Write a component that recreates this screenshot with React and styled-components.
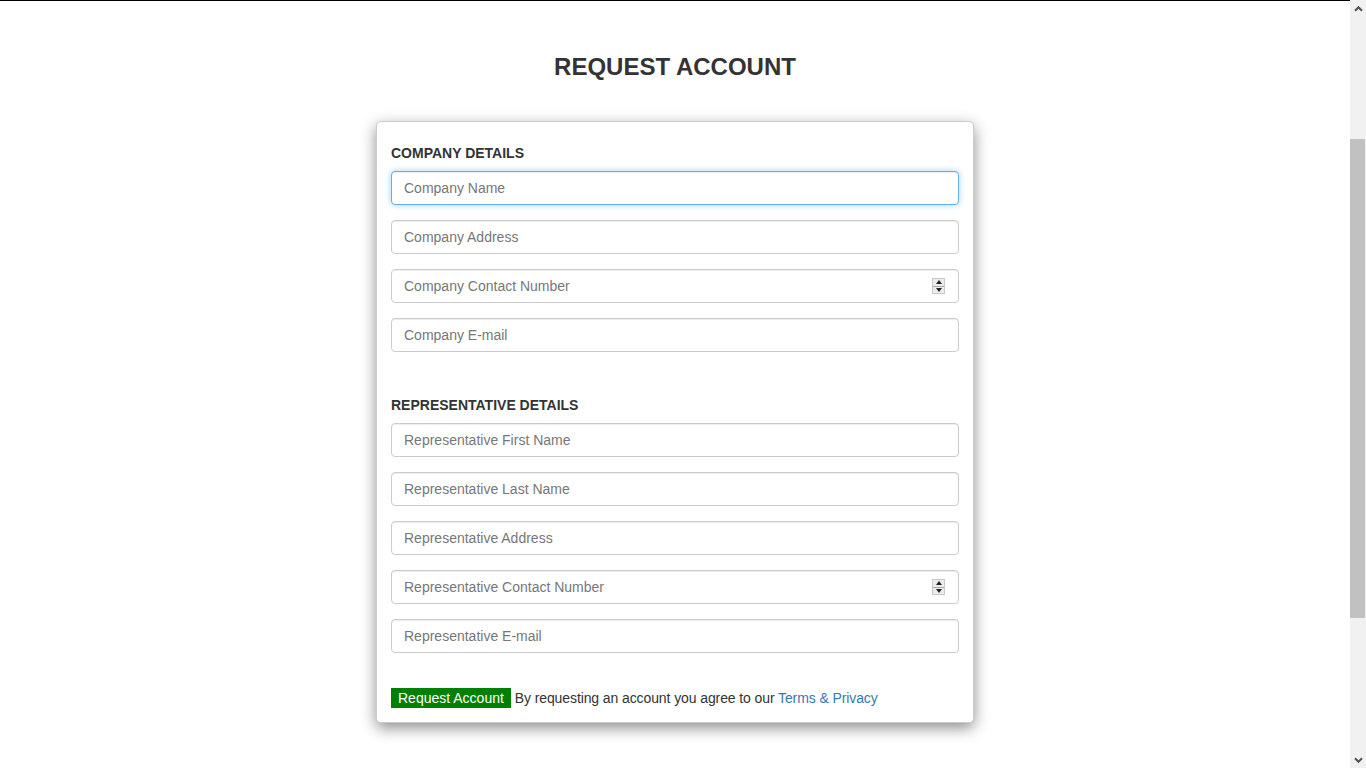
import React, { useEffect, useRef } from 'react';
import styled, { createGlobalStyle, css } from 'styled-components';

const GlobalStyle = createGlobalStyle`
  html::-webkit-scrollbar {
    display: none;
  }
  body {
    margin: 0;
    background: #fff;
    color: #333;
    font-family: "Liberation Sans", Arial, Helvetica, sans-serif;
    font-size: 14px;
  }
  * {
    box-sizing: border-box;
  }
`;

const Page = styled.div`
  margin-right: 16px;
`;

const Banner = styled.header`
  height: 196px;
  border-bottom: 1px solid #000;
`;

const Main = styled.main`
  display: flex;
  flex-direction: column;
  align-items: center;
  padding: 53px 0 258px;
`;

const Title = styled.h1`
  margin: 0 0 41px;
  font-size: 24px;
  line-height: 26px;
  font-weight: bold;
  color: #333;
`;

const Card = styled.form`
  width: 598px;
  padding: 23px 14px 14px;
  background: #fff;
  border: 1px solid rgba(0, 0, 0, 0.2);
  border-radius: 5px;
  box-shadow: 0 5px 15px rgba(0, 0, 0, 0.45);
`;

const Section = styled.section`
  display: flex;
  flex-direction: column;
  gap: 15px;
  margin-bottom: ${(p) => (p.$last ? '35px' : '45px')};
`;

const SectionTitle = styled.h5`
  margin: 0 0 -5px;
  font-size: 14px;
  line-height: 16px;
  font-weight: bold;
  color: #333;
`;

const Field = styled.div`
  position: relative;
`;

const Input = styled.input`
  display: block;
  width: 100%;
  height: 34px;
  padding: 6px 12px;
  font-family: inherit;
  font-size: 14px;
  color: #555;
  background: #fff;
  border: 1px solid #ccc;
  border-radius: 4px;
  box-shadow: inset 0 1px 1px rgba(0, 0, 0, 0.075);
  outline: none;

  &::placeholder {
    color: #777;
  }

  ${(p) =>
    p.$focused &&
    css`
      border-color: #66afe9;
      box-shadow: inset 0 1px 1px rgba(0, 0, 0, 0.075), 0 0 6px rgba(102, 175, 233, 0.6);
    `}
`;

const Spinner = styled.div`
  position: absolute;
  top: 9px;
  right: 14px;
  width: 13px;
  height: 16px;
  display: flex;
  flex-direction: column;
  border: 1px solid #c9c9c9;
  background: #ebebeb;
`;

const SpinHalf = styled.span`
  flex: 1;
  display: flex;
  align-items: center;
  justify-content: center;
  border-top: ${(p) => (p.$down ? '1px solid #a9a9a9' : 'none')};

  &::after {
    content: '';
    width: 0;
    height: 0;
    border-left: 3px solid transparent;
    border-right: 3px solid transparent;
    ${(p) =>
      p.$down
        ? 'border-top: 4px solid #222;'
        : 'border-bottom: 4px solid #222;'}
  }
`;

const Footer = styled.div`
  font-size: 14px;
  line-height: 20px;
  color: #333;
`;

const SubmitButton = styled.button`
  display: inline-block;
  padding: 0 7px;
  height: 20px;
  line-height: 20px;
  border: none;
  border-radius: 0;
  background: #008000;
  color: #fff;
  font-family: inherit;
  font-size: 14px;
  vertical-align: top;
  cursor: pointer;
`;

const Agreement = styled.span`
  letter-spacing: -0.1px;
`;

const Link = styled.a`
  color: #337ab7;
  text-decoration: none;
`;

/* window scrollbar as it shows in the captured page */
const ScrollBar = styled.div`
  position: fixed;
  top: 0;
  right: 0;
  width: 16px;
  height: 100vh;
  background: #f1f1f1;
  display: flex;
  flex-direction: column;
  justify-content: space-between;
`;

const ScrollArrow = styled.div`
  height: 17px;
  display: flex;
  align-items: center;
  justify-content: center;
`;

const ScrollThumb = styled.div`
  position: absolute;
  top: 139px;
  left: 0;
  width: 15px;
  height: 479px;
  background: #c1c1c1;
`;

const Chevron = ({ down }) => (
  <svg width="9" height="6" viewBox="0 0 9 6">
    <path
      d={down ? 'M1 1.2 L4.5 4.7 L8 1.2' : 'M1 4.8 L4.5 1.3 L8 4.8'}
      fill="none"
      stroke="#505050"
      strokeWidth="2"
    />
  </svg>
);

const company = [
  { name: 'Company Name' },
  { name: 'Company Address' },
  { name: 'Company Contact Number', number: true },
  { name: 'Company E-mail' },
];

const representative = [
  { name: 'Representative First Name' },
  { name: 'Representative Last Name' },
  { name: 'Representative Address' },
  { name: 'Representative Contact Number', number: true },
  { name: 'Representative E-mail' },
];

function TextField({ placeholder, number, focused }) {
  return (
    <Field>
      <Input type="text" placeholder={placeholder} $focused={focused} autoFocus={focused} />
      {number && (
        <Spinner>
          <SpinHalf />
          <SpinHalf $down />
        </Spinner>
      )}
    </Field>
  );
}

export default function App() {
  const bannerRef = useRef(null);

  useEffect(() => {
    // page is shown scrolled so the banner's bottom border sits at the top
    const h = bannerRef.current ? bannerRef.current.offsetHeight : 196;
    window.scrollTo(0, h - 1);
  }, []);

  return (
    <>
      <GlobalStyle />
      <Page>
        <Banner ref={bannerRef} />
        <Main>
          <Title>REQUEST ACCOUNT</Title>
          <Card onSubmit={(e) => e.preventDefault()}>
            <Section>
              <SectionTitle>COMPANY DETAILS</SectionTitle>
              {company.map((f, i) => (
                <TextField key={f.name} placeholder={f.name} number={f.number} focused={i === 0} />
              ))}
            </Section>
            <Section $last>
              <SectionTitle>REPRESENTATIVE DETAILS</SectionTitle>
              {representative.map((f) => (
                <TextField key={f.name} placeholder={f.name} number={f.number} />
              ))}
            </Section>
            <Footer>
              <SubmitButton type="submit">Request Account</SubmitButton>{' '}
              <Agreement>
                By requesting an account you agree to our <Link href="#">Terms &amp; Privacy</Link>
              </Agreement>
            </Footer>
          </Card>
        </Main>
      </Page>
      <ScrollBar>
        <ScrollArrow>
          <Chevron />
        </ScrollArrow>
        <ScrollThumb />
        <ScrollArrow>
          <Chevron down />
        </ScrollArrow>
      </ScrollBar>
    </>
  );
}
